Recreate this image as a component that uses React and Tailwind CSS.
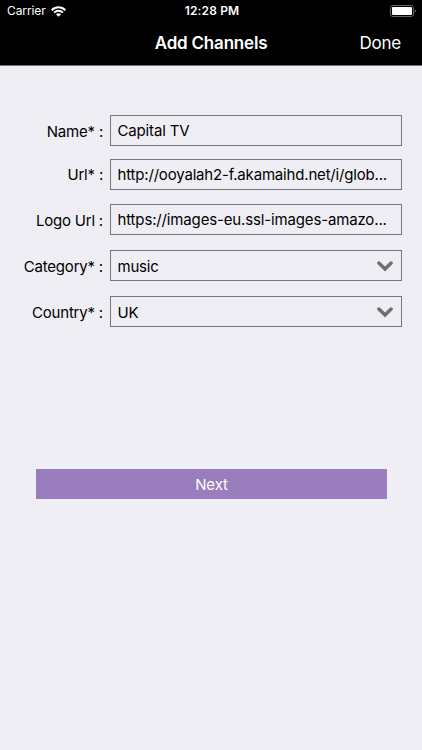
import { useState } from "react";

const FIELDS = [
  {
    label: "Name* :",
    value: "Capital TV",
    labelClass: "pt-[4px]",
    valueClass: "pt-[2px] tracking-[-0.15px]",
    rowClass: "mb-[13px]",
  },
  {
    label: "Url* :",
    value: "http://ooyalah2-f.akamaihd.net/i/glob...",
    labelClass: "pt-[2px]",
    valueClass: "pt-[2px] tracking-[-0.18px]",
    rowClass: "mb-[14px]",
  },
  {
    label: "Logo Url :",
    value: "https://images-eu.ssl-images-amazo...",
    labelClass: "pt-[4px]",
    valueClass: "pt-[2px] tracking-[-0.15px]",
    rowClass: "mb-[15px]",
  },
  {
    label: "Category* :",
    value: "music",
    select: true,
    labelClass: "pt-[3px]",
    valueClass: "pt-[3px] tracking-[-0.2px]",
    rowClass: "mb-[15px]",
  },
  {
    label: "Country* :",
    value: "UK",
    select: true,
    labelClass: "pt-[3px]",
    valueClass: "pt-[3px] tracking-[-0.2px]",
    rowClass: "",
  },
];

function WifiIcon() {
  return (
    <svg width="15" height="11" viewBox="0 0 15 11" fill="none">
      <path
        d="M0.7 4.2C4.4 0.4 10.6 0.4 14.3 4.2M3.1 6.6C5.6 4.1 9.4 4.1 11.9 6.6"
        stroke="white"
        strokeWidth="2"
      />
      <path d="M7.5 10.8L4.9 8.2C6.3 6.9 8.7 6.9 10.1 8.2Z" fill="white" />
    </svg>
  );
}

function BatteryIcon() {
  return (
    <svg width="27" height="12" viewBox="0 0 27 12" fill="none">
      <rect x="0.5" y="0.5" width="23" height="11" rx="2.4" stroke="#666" />
      <rect x="2" y="2" width="20" height="8" rx="1" fill="white" />
      <path d="M24.8 4.2C26.4 4.6 26.4 7.4 24.8 7.8Z" fill="#666" />
    </svg>
  );
}

function ChevronIcon() {
  return (
    <svg
      className="mt-px"
      width="16"
      height="11"
      viewBox="0 0 16 11"
      fill="none"
    >
      <path
        d="M1.9 2L8 8L14.1 2"
        stroke="#707074"
        strokeWidth="3.5"
        strokeLinecap="round"
      />
    </svg>
  );
}

function StatusBar() {
  return (
    <div className="grid h-[22px] grid-cols-3 items-center pl-[7px] pr-[5px]">
      <div className="flex items-center gap-[5px] text-[12px]">
        <span className="tracking-[-0.1px]">Carrier</span>
        <WifiIcon />
      </div>
      <span className="text-center text-[12px] font-semibold tracking-[0.15px]">
        12:28 PM
      </span>
      <div className="flex justify-end">
        <BatteryIcon />
      </div>
    </div>
  );
}

function NavBar({ onDone }) {
  return (
    <div className="grid h-[43px] grid-cols-[1fr_auto_1fr] items-center">
      <span />
      <h1 className="text-[17px] font-semibold tracking-[-0.2px]">
        Add Channels
      </h1>
      <button
        className="justify-self-end pr-[21px] text-[17px] tracking-[-0.2px]"
        onClick={onDone}
      >
        Done
      </button>
    </div>
  );
}

function FieldRow({ field }) {
  return (
    <div className={`flex h-[31px] ${field.rowClass}`}>
      <div
        className={`flex w-[103px] items-center justify-end whitespace-nowrap text-[15px] tracking-[-0.2px] ${field.labelClass}`}
      >
        {field.label}
      </div>
      <div className="ml-[7px] flex w-[292px] items-center justify-between border border-[#77767c] pl-[6.5px] pr-2 text-[15px]">
        <span className={`whitespace-nowrap ${field.valueClass}`}>
          {field.value}
        </span>
        {field.select && <ChevronIcon />}
      </div>
    </div>
  );
}

export default function App() {
  const [done, setDone] = useState(false);

  return (
    <div className="h-[750px] w-[422px] overflow-hidden bg-[#efeef4] font-['Inter','Liberation_Sans',sans-serif] text-black">
      <header className="border-b border-[#75747a] bg-black text-white">
        <StatusBar />
        <NavBar onDone={() => setDone(!done)} />
      </header>
      <main className="pt-[49px]">
        {FIELDS.map((field) => (
          <FieldRow key={field.label} field={field} />
        ))}
        <button className="ml-9 mt-[142px] block h-[30px] w-[351px] bg-[#997dbd] pt-[2px] text-[15px] tracking-[-0.1px] text-white">
          Next
        </button>
      </main>
    </div>
  );
}
